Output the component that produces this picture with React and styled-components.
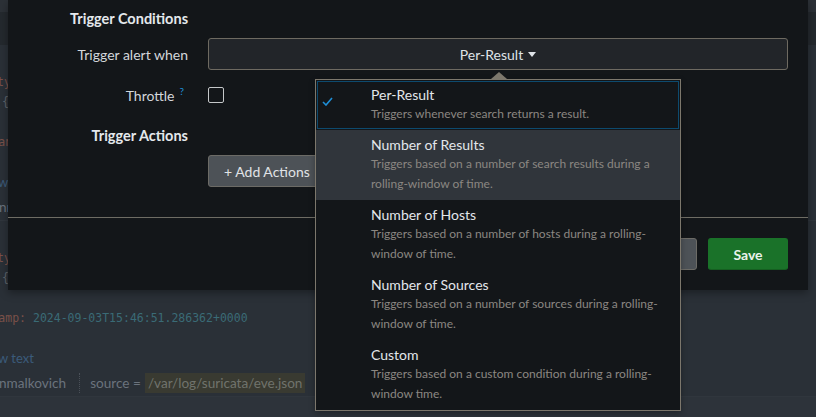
import React from "react";
import styled, { createGlobalStyle } from "styled-components";

const GlobalStyle = createGlobalStyle`
  html, body {
    margin: 0;
    padding: 0;
    background: #2b3138;
  }
  body {
    font-family: Lato, "Open Sans", sans-serif;
    overflow: hidden;
  }
`;

const Page = styled.div`
  position: relative;
  width: 816px;
  height: 417px;
  overflow: hidden;
  background: #2d333a;
`;

/* ---- search results behind the modal ---- */

const TopBand = styled.div`
  height: 12px;
  background: #2c3137;
`;

const HeaderBand = styled.div`
  height: 33px;
  background: #24292e;
`;

const Event = styled.div`
  height: 176px;
  box-sizing: border-box;
  padding-top: 27px;
  background: #2a3037;
  border-bottom: 1px solid #30363d;
`;

const CodeLine = styled.div`
  height: 20px;
  line-height: 20px;
  font-family: "DejaVu Sans Mono", "Liberation Mono", monospace;
  font-size: 11.5px;
  white-space: pre;
  color: ${(p) => p.$color || "#5d646c"};
  margin-left: ${(p) => p.$indent || 0}px;
`;

const Key = styled.span`
  color: #7a5049;
`;

const Value = styled.span`
  color: #3a6b76;
`;

const RawLink = styled.div`
  margin-top: 20px;
  height: 20px;
  line-height: 20px;
  font-size: 13px;
  color: #3b5b7b;
  margin-left: -2px;
`;

const Meta = styled.div`
  margin-top: 5px;
  height: 20px;
  display: flex;
  align-items: center;
  font-size: 13.6px;
  color: #6b737d;
  margin-left: -1px;
`;

const MetaSep = styled.span`
  height: 20px;
  border-left: 1px dotted #4a5058;
  margin: 0 10px 0 13px;
`;

const MetaValue = styled.span`
  height: 20px;
  line-height: 20px;
  padding: 0 3px;
  margin-left: 4px;
  background: #393a31;
  color: #70736c;
`;

function EventRow({ keyName, value }) {
  return (
    <Event>
      <CodeLine $color="#7a5049" $indent={-3}>ty</CodeLine>
      <CodeLine $indent={2}>{"{"}</CodeLine>
      <CodeLine />
      <CodeLine $indent={-8.6}>
        <Key>{keyName}</Key>
        <Value>{value}</Value>
      </CodeLine>
      <RawLink>w text</RawLink>
      <Meta>
        nmalkovich
        <MetaSep />
        source =<MetaValue>/var/log/suricata/eve.json</MetaValue>
      </Meta>
    </Event>
  );
}

/* ---- modal ---- */

const Modal = styled.div`
  position: absolute;
  left: 8px;
  top: 0;
  width: 800px;
  height: 290px;
  background: #131619;
  box-shadow: 0 3px 8px rgba(0, 0, 0, 0.35);
  display: flex;
  flex-direction: column;
`;

const Body = styled.div`
  height: 217px;
  display: flex;
  flex-direction: column;
`;

const Row = styled.div`
  display: grid;
  grid-template-columns: 180px 580px;
  column-gap: 20px;
  align-items: center;
  height: ${(p) => p.$h}px;
  margin-top: ${(p) => p.$top}px;
`;

const Heading = styled.div`
  text-align: right;
  font-size: 14.5px;
  font-weight: 700;
  color: #e4e8ec;
`;

const Label = styled.div`
  text-align: right;
  font-size: 14px;
  color: #d3d7db;
`;

const Help = styled.sup`
  color: #1e8fd8;
  font-size: 10px;
  margin-left: 5px;
  margin-right: 4px;
  vertical-align: 6px;
  line-height: 0;
`;

const Select = styled.div`
  height: 32px;
  box-sizing: border-box;
  background: #222529;
  border: 1px solid #6e6a61;
  border-radius: 3px;
  display: flex;
  align-items: center;
  justify-content: center;
  gap: 5px;
  font-size: 14px;
  color: #dfe3e7;
`;

const Checkbox = styled.div`
  width: 16px;
  height: 16px;
  box-sizing: border-box;
  border: 1px solid #c5c7c9;
  border-radius: 2px;
`;

const Button = styled.div`
  height: 32px;
  box-sizing: border-box;
  display: inline-flex;
  align-items: center;
  justify-content: center;
  gap: 5px;
  padding: 0 15px;
  min-width: ${(p) => p.$w || 0}px;
  border-radius: 3px;
  font-size: 14px;
  font-weight: ${(p) => (p.$primary ? 700 : 400)};
  color: ${(p) => (p.$primary ? "#eaf2ec" : "#e0e3e6")};
  background: ${(p) => (p.$primary ? "#1a7229" : "#4d5257")};
  border: 1px solid ${(p) => (p.$primary ? "#1a7229" : "#6c6b66")};
  border-bottom-color: ${(p) => (p.$primary ? "#155f21" : "#6c6b66")};
`;

const ControlCell = styled.div`
  display: flex;
  align-items: center;
`;

const Divider = styled.div`
  border-top: 1px solid #6e6c64;
`;

const Footer = styled.div`
  flex: 1;
  display: flex;
  align-items: center;
  justify-content: flex-end;
  gap: 11px;
  padding-right: 20px;
`;

/* ---- popover menu ---- */

const Popover = styled.div`
  position: absolute;
  left: 315px;
  top: 79px;
  width: 366px;
  box-sizing: border-box;
  background: #131619;
  border: 1px solid #7c776c;
  box-shadow: 0 2px 6px rgba(0, 0, 0, 0.3);

  &::before {
    content: "";
    position: absolute;
    top: -8px;
    left: 175px;
    border-left: 8px solid transparent;
    border-right: 8px solid transparent;
    border-bottom: 7px solid #7c776c;
  }
`;

const Item = styled.div`
  display: grid;
  grid-template-columns: 55px 1fr;
  padding: 6px 20px 6px 0;
  background: ${(p) => (p.$hover ? "#30353b" : "transparent")};
  box-shadow: ${(p) =>
    p.$selected ? "inset 0 0 0 1px #131619, inset 0 0 0 2px #0d4a6e" : "none"};
`;

const CheckCell = styled.div`
  padding: 4px 0 0 6px;
`;

const ItemTitle = styled.div`
  font-size: 14px;
  line-height: 18px;
  color: #e3e7eb;
`;

const ItemDesc = styled.div`
  font-size: 12px;
  line-height: 20px;
  color: #8b8782;
`;

const Caret = () => (
  <svg width="8" height="5" viewBox="0 0 8 5">
    <path d="M0 0h8L4 5z" fill="currentColor" />
  </svg>
);

const Check = () => (
  <svg width="11" height="9" viewBox="0 0 11 9">
    <path d="M1 5l3 3 6-7" fill="none" stroke="#1e8fd8" strokeWidth="1.6" />
  </svg>
);

const options = [
  {
    title: "Per-Result",
    desc: "Triggers whenever search returns a result.",
    selected: true,
  },
  {
    title: "Number of Results",
    desc: "Triggers based on a number of search results during a rolling-window of time.",
    hover: true,
  },
  {
    title: "Number of Hosts",
    desc: "Triggers based on a number of hosts during a rolling-window of time.",
  },
  {
    title: "Number of Sources",
    desc: "Triggers based on a number of sources during a rolling-window of time.",
  },
  {
    title: "Custom",
    desc: "Triggers based on a custom condition during a rolling-window time.",
  },
];

export default function App() {
  return (
    <Page>
      <GlobalStyle />
      <TopBand />
      <HeaderBand />
      <EventRow keyName=" an" value="" />
      <EventRow keyName="tamp: " value="2024-09-03T15:46:51.286362+0000" />

      <Modal>
        <Body>
          <Row $h={20} $top={8}>
            <Heading>Trigger Conditions</Heading>
          </Row>
          <Row $h={32} $top={10}>
            <Label>Trigger alert when</Label>
            <Select>
              Per-Result <Caret />
            </Select>
          </Row>
          <Row $h={32} $top={9}>
            <Label>
              Throttle<Help>?</Help>
            </Label>
            <ControlCell>
              <Checkbox />
            </ControlCell>
          </Row>
          <Row $h={20} $top={14}>
            <Heading>Trigger Actions</Heading>
          </Row>
          <Row $h={32} $top={10}>
            <span />
            <ControlCell>
              <Button $w={122}>
                + Add Actions <Caret />
              </Button>
            </ControlCell>
          </Row>
        </Body>
        <Divider />
        <Footer>
          <Button $w={80}>Cancel</Button>
          <Button $w={80} $primary>
            Save
          </Button>
        </Footer>
      </Modal>

      <Popover>
        {options.map((o) => (
          <Item key={o.title} $selected={o.selected} $hover={o.hover}>
            <CheckCell>{o.selected && <Check />}</CheckCell>
            <div>
              <ItemTitle>{o.title}</ItemTitle>
              <ItemDesc>{o.desc}</ItemDesc>
            </div>
          </Item>
        ))}
      </Popover>
    </Page>
  );
}
